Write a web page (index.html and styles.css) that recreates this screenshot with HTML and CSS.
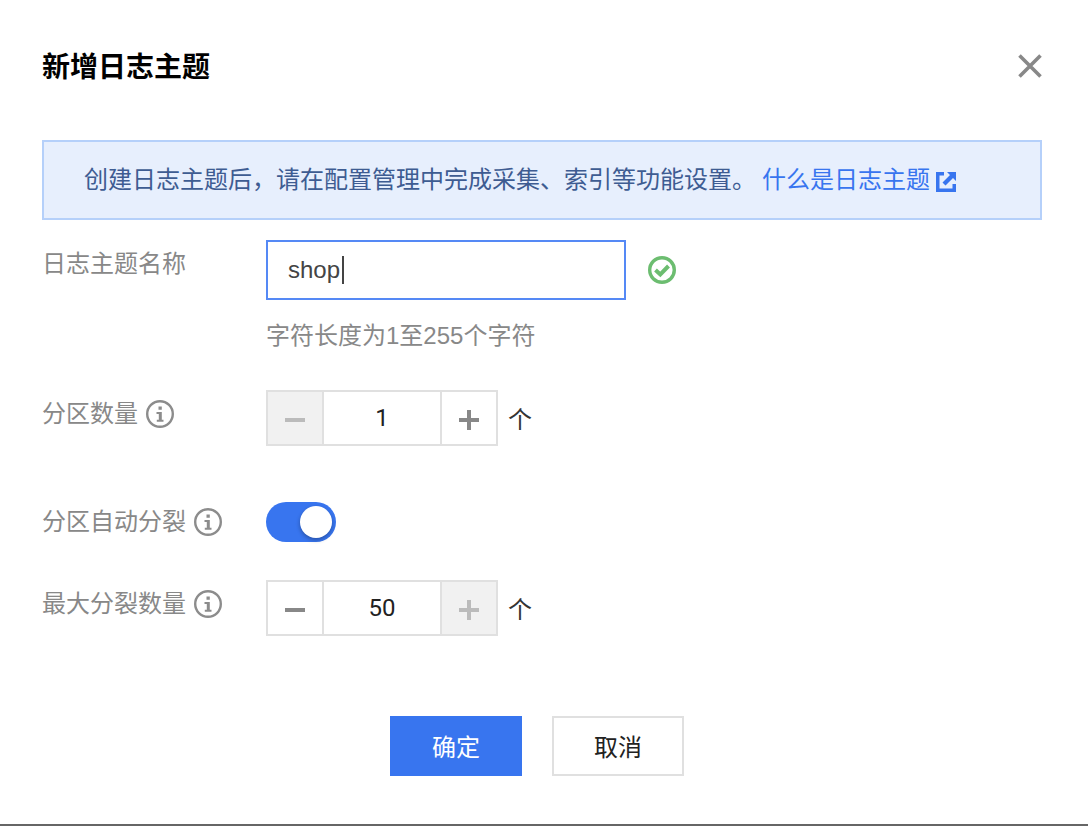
FILE: index.html
```html
<!DOCTYPE html>
<html lang="zh-CN">
<head>
    <meta charset="UTF-8">
    <meta name="viewport" content="width=device-width, initial-scale=1.0">
    <title>新增日志主题</title>
    <link rel="stylesheet" href="styles.css">
</head>
<body>
    <div class="dialog">
        <div class="header">
            <h1>新增日志主题</h1>
            <button type="button" class="close" aria-label="关闭">
                <svg width="24" height="24" viewBox="0 0 24 24"><path d="M1.5 1.5L22.5 22.5M22.5 1.5L1.5 22.5" stroke="#888" stroke-width="3.6" fill="none"/></svg>
            </button>
        </div>

        <div class="alert">
            <span>创建日志主题后，请在配置管理中完成采集、索引等功能设置。</span>
            <a href="#">什么是日志主题<svg width="20" height="20" viewBox="0 0 20 20"><path d="M8 0H0V20H20V12H16.500V16.500H3.500V3.500H8Z" fill="#3875ef"/><path d="M11 0H20V9L17 6L9.500 13.500L6.500 10.500L14 3Z" fill="#3875ef"/></svg></a>
        </div>

        <form>
            <div class="row">
                <div class="label"><label for="topic">日志主题名称</label></div>
                <div class="field">
                    <div class="line">
                        <div class="textbox">
                            <input type="text" id="topic" value="shop">
                            <span class="caret"></span>
                        </div>
                        <svg width="28" height="28" viewBox="0 0 28 28"><circle cx="14" cy="14" r="12.300" stroke="#6cbd70" stroke-width="3.400" fill="none"/><path d="M7.500 14L12.300 18.500L20.500 10" stroke="#6cbd70" stroke-width="4" fill="none"/></svg>
                    </div>
                    <p class="hint">字符长度为1至255个字符</p>
                </div>
            </div>

            <div class="row count">
                <div class="label">
                    <label for="count">分区数量</label>
                    <svg width="28" height="28" viewBox="0 0 28 28"><circle cx="14" cy="14" r="12.800" stroke="#8c8c8c" stroke-width="2.400" fill="none"/><path d="M12.500 6.500H15.800V9.800H12.500ZM10.500 12H15.800V19.800H17.500V21.800H10.800V19.800H12.800V14H10.500Z" fill="#8c8c8c"/></svg>
                </div>
                <div class="stepper">
                    <button type="button" aria-label="减少分区数量" disabled><svg width="20" height="20" viewBox="0 0 20 20"><path d="M0 10H20"/></svg></button>
                    <input type="text" inputmode="numeric" id="count" value="1">
                    <button type="button" aria-label="增加分区数量"><svg width="20" height="20" viewBox="0 0 20 20"><path d="M0 10H20M10 0V20"/></svg></button>
                </div>
                <span class="unit">个</span>
            </div>

            <div class="row auto">
                <div class="label">
                    <label for="auto">分区自动分裂</label>
                    <svg width="28" height="28" viewBox="0 0 28 28"><circle cx="14" cy="14" r="12.800" stroke="#8c8c8c" stroke-width="2.400" fill="none"/><path d="M12.500 6.500H15.800V9.800H12.500ZM10.500 12H15.800V19.800H17.500V21.800H10.800V19.800H12.800V14H10.500Z" fill="#8c8c8c"/></svg>
                </div>
                <input type="checkbox" class="switch" id="auto" checked>
            </div>

            <div class="row max">
                <div class="label">
                    <label for="max">最大分裂数量</label>
                    <svg width="28" height="28" viewBox="0 0 28 28"><circle cx="14" cy="14" r="12.800" stroke="#8c8c8c" stroke-width="2.400" fill="none"/><path d="M12.500 6.500H15.800V9.800H12.500ZM10.500 12H15.800V19.800H17.500V21.800H10.800V19.800H12.800V14H10.500Z" fill="#8c8c8c"/></svg>
                </div>
                <div class="stepper">
                    <button type="button" aria-label="减少最大分裂数量"><svg width="20" height="20" viewBox="0 0 20 20"><path d="M0 10H20"/></svg></button>
                    <input type="text" inputmode="numeric" id="max" value="50">
                    <button type="button" aria-label="增加最大分裂数量" disabled><svg width="20" height="20" viewBox="0 0 20 20"><path d="M0 10H20M10 0V20"/></svg></button>
                </div>
                <span class="unit">个</span>
            </div>

            <div class="footer">
                <button type="submit" class="btn primary">确定</button>
                <button type="button" class="btn">取消</button>
            </div>
        </form>
    </div>
</body>
</html>
```
FILE: styles.css
```css
*{
    box-sizing: border-box;
}
body{
    margin: 0;
    background: #fff;
}
body,input,button{
    font-family: "Liberation Sans", "Noto Sans CJK SC", sans-serif;
    font-size: 24px;
    line-height: 36px;
}
input,button{
    margin: 0;
    padding: 0;
    border-radius: 0;
    outline: none;
}
svg{
    flex: none;
}
.dialog{
    min-height: 100vh;
    padding: 46px 46px 48px 42px;
    border-bottom: 2px solid #666;
}
.header{
    display: flex;
    justify-content: space-between;
    align-items: center;
    height: 40px;
}
h1{
    margin: 0;
    padding-top: 4px;
    font-size: 28px;
    line-height: 40px;
    font-weight: bold;
    color: #000;
}
.close{
    display: flex;
    border: none;
    background: none;
    cursor: pointer;
}
/* blue tip */
.alert{
    display: flex;
    align-items: center;
    gap: 6px;
    margin-top: 54px;
    padding: 20px 40px;
    border: 2px solid #b5d0fa;
    background: #e7effd;
    color: #3e5c92;
}
.alert a{
    display: flex;
    align-items: center;
    gap: 6px;
    color: #3875ef;
    text-decoration: none;
}
.alert a svg{
    margin-top: 4px;
}
/* form rows */
.row{
    display: flex;
    align-items: flex-start;
    margin-top: 20px;
}
.label{
    display: flex;
    align-items: center;
    gap: 8px;
    flex: none;
    width: 224px;
    padding-top: 6px;
    color: #888;
}
.field{
    flex: 1;
}
.line{
    display: flex;
    align-items: center;
    gap: 22px;
}
.textbox{
    position: relative;
    width: 360px;
}
.textbox input{
    display: block;
    width: 100%;
    height: 60px;
    padding: 0 20px;
    border: 2px solid #5589f5;
    color: #444;
}
.caret{
    position: absolute;
    left: 76px;
    top: 16px;
    width: 2px;
    height: 28px;
    background: #444;
}
.hint{
    margin: 18px 0 0;
    color: #888;
}
.count{
    margin-top: 36px;
}
.auto{
    margin-top: 52px;
}
.max{
    margin-top: 38px;
}
.stepper{
    display: flex;
    width: 232px;
    height: 56px;
    border: 2px solid #e0e0e0;
}
.stepper button{
    display: flex;
    align-items: center;
    justify-content: center;
    flex: none;
    width: 54px;
    padding-top: 4px;
    border: none;
    background: #fff;
}
.stepper button:disabled{
    background: #f1f1f1;
}
.stepper path{
    stroke: #888;
    stroke-width: 4;
}
.stepper button:disabled path{
    stroke: #bbb;
}
.stepper input{
    flex: 1;
    min-width: 0;
    border: solid #e0e0e0;
    border-width: 0 2px;
    font-family: Roboto, sans-serif;
    text-align: center;
    color: #222;
}
.unit{
    margin-left: 10px;
    padding-top: 12px;
    color: #333;
}
.switch{
    appearance: none;
    width: 70px;
    height: 40px;
    margin-top: 4px;
    padding: 4px;
    border-radius: 20px;
    background: #ccc;
    cursor: pointer;
}
.switch::before{
    content: "";
    display: block;
    width: 32px;
    height: 32px;
    border-radius: 50%;
    background: #fff;
    box-shadow: 0 2px 4px rgba(0, 0, 0, 0.3);
}
.switch:checked{
    background: #3875ef;
}
.switch:checked::before{
    margin-left: auto;
}
.footer{
    display: flex;
    justify-content: center;
    gap: 30px;
    margin-top: 80px;
    padding-right: 10px;
}
.btn{
    width: 132px;
    height: 60px;
    padding-top: 4px;
    border: 2px solid #e0e0e0;
    background: #fff;
    color: #222;
    cursor: pointer;
}
.primary{
    border-color: #3875ef;
    background: #3875ef;
    color: #fff;
}
```
